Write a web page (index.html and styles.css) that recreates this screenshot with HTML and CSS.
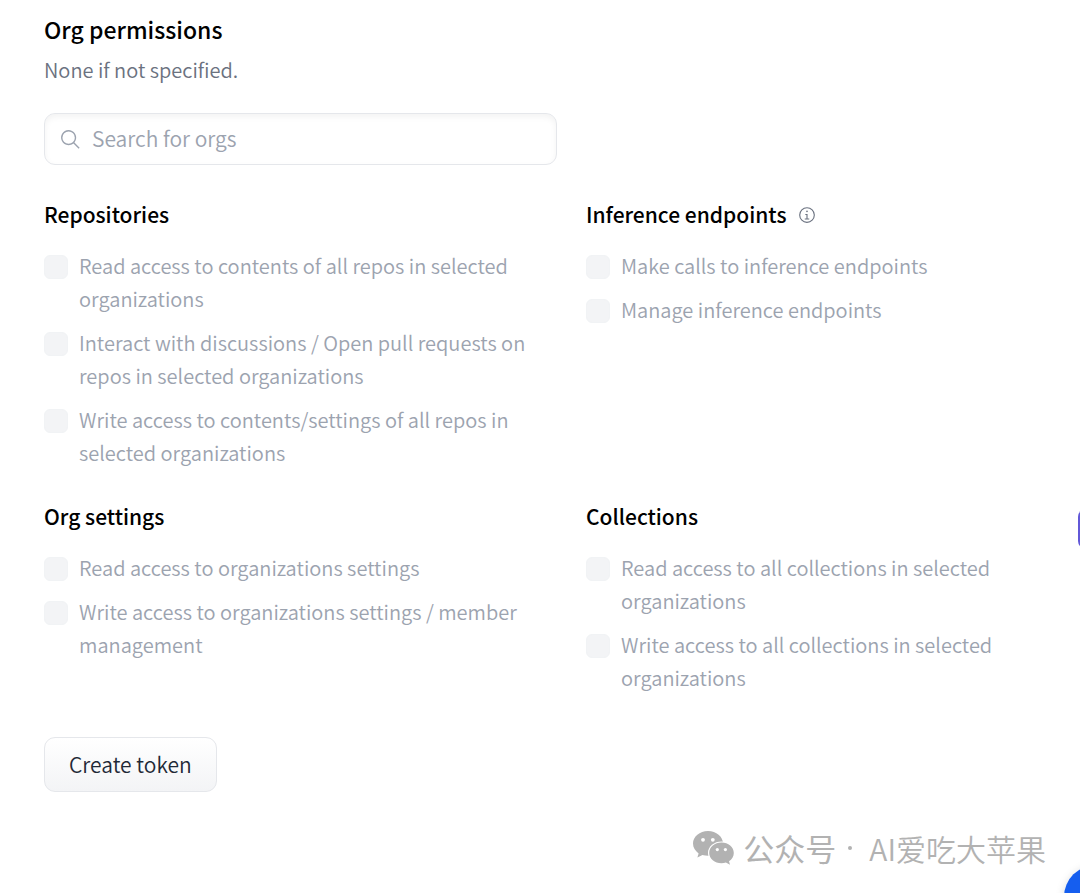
FILE: index.html
```html
<!DOCTYPE html>
<html lang="en">
<head>
  <meta charset="UTF-8" />
  <meta name="viewport" content="width=device-width, initial-scale=1.0" />
  <title>Create new Access Token</title>
  <link rel="stylesheet" href="styles.css">
</head>
<body>
  <form class="permissions">
    <h2 class="title">Org permissions</h2>
    <p class="subtitle">None if not specified.</p>

    <!-- Org search -->
    <div class="search">
      <svg class="search-icon" viewBox="0 0 32 32" aria-hidden="true">
        <path d="M30 28.59L22.45 21A11 11 0 1 0 21 22.45L28.59 30zM5 14a9 9 0 1 1 9 9a9 9 0 0 1-9-9z" fill="currentColor" />
      </svg>
      <input class="search-input" type="text" placeholder="Search for orgs" aria-label="Search for orgs" />
    </div>

    <!-- Permission groups -->
    <div class="groups">
      <section class="group">
        <h3 class="group-title">Repositories</h3>
        <label class="option"><input type="checkbox" disabled /><span>Read access to contents of all repos in selected organizations</span></label>
        <label class="option"><input type="checkbox" disabled /><span>Interact with discussions / Open pull requests on repos in selected organizations</span></label>
        <label class="option"><input type="checkbox" disabled /><span>Write access to contents/settings of all repos in selected organizations</span></label>
      </section>

      <section class="group">
        <h3 class="group-title">
          Inference endpoints
          <svg class="info-icon" viewBox="0 0 32 32" aria-hidden="true">
            <path d="M17 22v-8h-4v2h2v6h-3v2h8v-2zM16 8a1.5 1.5 0 1 0 1.5 1.5A1.5 1.5 0 0 0 16 8z" fill="currentColor" />
            <path d="M16 30a14 14 0 1 1 14-14a14 14 0 0 1-14 14zm0-26a12 12 0 1 0 12 12A12 12 0 0 0 16 4z" fill="currentColor" />
          </svg>
        </h3>
        <label class="option"><input type="checkbox" disabled /><span>Make calls to inference endpoints</span></label>
        <label class="option"><input type="checkbox" disabled /><span>Manage inference endpoints</span></label>
      </section>

      <section class="group">
        <h3 class="group-title">Org settings</h3>
        <label class="option"><input type="checkbox" disabled /><span>Read access to organizations settings</span></label>
        <label class="option"><input type="checkbox" disabled /><span>Write access to organizations settings / member management</span></label>
      </section>

      <section class="group">
        <h3 class="group-title">Collections</h3>
        <label class="option"><input type="checkbox" disabled /><span>Read access to all collections in selected organizations</span></label>
        <label class="option"><input type="checkbox" disabled /><span>Write access to all collections in selected organizations</span></label>
      </section>
    </div>

    <button class="submit-btn" type="submit">Create token</button>
  </form>

  <!-- Account mark -->
  <div class="account" lang="zh-CN">
    <svg class="account-icon" viewBox="0 0 42 34" aria-hidden="true">
      <path d="M15 0C6.700 0 0 5.600 0 12.600c0 4 2.200 7.500 5.600 9.800L4.400 26.600l5-2.600c1.800.5 3.700.8 5.600.8 8.300 0 15-5.500 15-12.300S23.300 0 15 0z" fill="#b2b2b2" />
      <ellipse cx="28.500" cy="22" rx="13.500" ry="11.500" fill="#fff" />
      <path d="M28.500 11.600c-6.800 0-12.300 4.600-12.300 10.300s5.500 10.300 12.300 10.300c1.600 0 3-.2 4.400-.6l4.100 2.200-1-3.500c2.900-1.900 4.800-4.900 4.800-8.400 0-5.700-5.500-10.300-12.300-10.300z" fill="#b2b2b2" />
      <g fill="#fff">
        <circle cx="10" cy="8.800" r="1.900" />
        <circle cx="19.800" cy="8.800" r="1.900" />
        <circle cx="24.300" cy="18.600" r="1.600" />
        <circle cx="32.400" cy="18.600" r="1.600" />
      </g>
    </svg>
    <span class="account-label">公众号</span>
    <span class="account-dot"></span>
    <span class="account-name">AI爱吃大苹果</span>
  </div>

  <!-- Floating widgets on the right edge -->
  <div class="side-tab"></div>
  <div class="chat-bubble"></div>
</body>
</html>
```

FILE: styles.css
```css
* {
  box-sizing: border-box;
}

body {
  margin: 0;
  background: #fff;
  color: #000;
  font-family: 'Noto Sans CJK SC', 'Noto Sans', sans-serif;
  font-size: 20px;
  font-weight: 350;
  line-height: 33px;
}

.permissions {
  padding: 13px 0 0 44px;
}

.title,
.group-title {
  margin: 0;
  font-weight: 500;
}

.title {
  font-size: 23px;
}

.subtitle {
  margin: 7px 0 27px;
  color: #6b7280;
}

.search {
  display: flex;
  align-items: center;
  gap: 11px;
  max-width: 513px;
  height: 52px;
  padding: 0 14px;
  border: 1px solid #e5e7eb;
  border-radius: 11px;
  box-shadow: inset 0 3px 6px rgba(0, 0, 0, 0.05);
  color: #9ca3af;
}

.search-icon {
  width: 22px;
  height: 22px;
}

.search-input {
  flex: 1;
  padding: 0 0 2px;
  border: none;
  outline: none;
  background: transparent;
  font: inherit;
  font-size: 21px;
}

.search-input::placeholder {
  color: #9ca3af;
}

.groups {
  display: grid;
  grid-template-columns: 1fr 1fr;
  gap: 31px 48px;
  margin-top: 33px;
}

.group {
  display: flex;
  flex-direction: column;
  gap: 11px;
}

.group-title {
  display: flex;
  align-items: center;
  gap: 12px;
  margin-bottom: 7px;
  font-size: 21px;
}

.info-icon {
  width: 18px;
  height: 18px;
  color: #6b7280;
}

.option {
  display: flex;
  align-items: flex-start;
  gap: 11px;
  color: #9ca3af;
}

.option input {
  appearance: none;
  flex: none;
  width: 24px;
  height: 24px;
  margin: 6px 0 0;
  border: 1px solid #f1f3f5;
  border-radius: 6px;
  background: #f3f4f6;
}

.submit-btn {
  margin-top: 43px;
  height: 55px;
  padding: 0 24px;
  border: 1px solid #e5e7eb;
  border-radius: 11px;
  background: linear-gradient(#fff, #f3f4f6);
  color: #1f2937;
  font: inherit;
  font-size: 21px;
  cursor: pointer;
}

.account {
  position: absolute;
  right: 34px;
  bottom: 23px;
  display: flex;
  align-items: center;
  color: #b2b2b2;
  font-size: 30px;
  line-height: 44px;
}

.account-icon {
  width: 42px;
  height: 34px;
  margin-right: 8px;
}

.account-label {
  font-size: 31px;
  font-weight: 400;
}

.account-dot {
  width: 4px;
  height: 4px;
  margin: 0 17px 0 12px;
  border-radius: 50%;
  background: #b2b2b2;
}

/* clips the widgets that hang over the edge */
html {
  overflow: hidden;
}

.side-tab {
  position: absolute;
  top: 509px;
  right: -38px;
  width: 40px;
  height: 40px;
  border-radius: 8px;
  background: #6258d8;
}

.chat-bubble {
  position: absolute;
  right: -48px;
  bottom: -36px;
  width: 64px;
  height: 64px;
  border-radius: 50%;
  background: #155eef;
  box-shadow: 0 2px 10px rgba(0, 0, 0, 0.15);
}
```
